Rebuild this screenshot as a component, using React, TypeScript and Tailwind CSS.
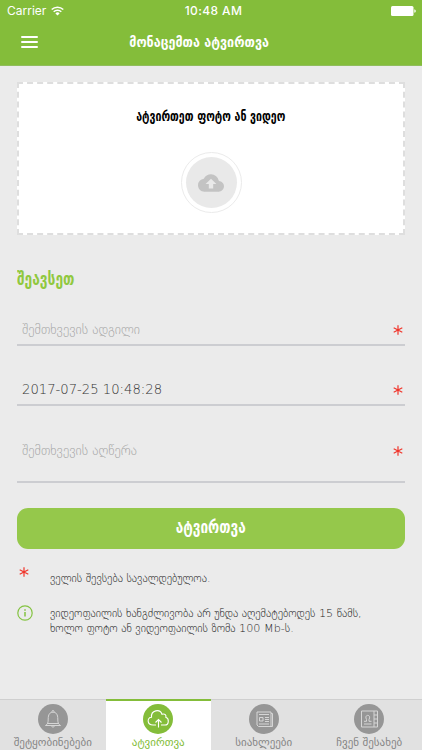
import type { ReactNode } from "react";

interface FieldProps {
  text: string;
  filled?: boolean;
  className: string;
}

interface TabProps {
  label: string;
  active?: boolean;
  children: ReactNode;
}

const CONDENSED = "font-['DejaVu_Sans_Condensed','DejaVu_Sans',sans-serif] font-bold whitespace-nowrap";

function Asterisk({ className = "" }: { className?: string }) {
  return (
    <svg viewBox="0 0 10 10" className={`w-[10px] h-[10px] shrink-0 ${className}`} stroke="#f0352b" strokeWidth="1.2">
      <path d="M5 .3v9.4M.7 2.7l8.6 4.6M9.3 2.7L.7 7.3" />
    </svg>
  );
}

function Field({ text, filled, className }: FieldProps) {
  return (
    <div className={`flex justify-between border-b-2 border-[#cccdd1] pl-[5px] pr-[2px] ${className}`}>
      <span className={`text-[13.2px] leading-[22px] font-extralight whitespace-nowrap ${filled ? "text-[#333]" : "text-[#a5a5a5]"}`}>
        {text}
      </span>
      <Asterisk className="mt-[6px]" />
    </div>
  );
}

function Tab({ label, active, children }: TabProps) {
  return (
    <div
      className={`flex-1 flex flex-col items-center ${
        active ? "bg-white border-t-2 border-[#84bd3a] pt-[3px]" : "bg-[#e1e1e1] border-t border-[#cfcfcf] pt-1"
      }`}
    >
      <svg viewBox="0 0 30 30" className="w-[30px] h-[30px] shrink-0" fill="none" stroke={active ? "#fff" : "#d6d6d6"} strokeWidth="1">
        <circle cx="15" cy="15" r="15" fill={active ? "#84bd3a" : "#969696"} stroke="none" />
        {children}
      </svg>
      <span className={`mt-0.5 text-[11px] leading-[14px] whitespace-nowrap ${active ? "text-[#84bd3a]" : "text-[#858585]"}`}>
        {label}
      </span>
    </div>
  );
}

export default function App() {
  return (
    <div className="w-[422px] h-[750px] flex flex-col overflow-hidden bg-[#ebebeb] font-['DejaVu_Sans',sans-serif]">
      <header className="h-[66px] shrink-0 bg-[#84bd3a] text-white border-b border-[#90bd5c]">
        {/* Status bar */}
        <div className="h-[22px] grid grid-cols-3 items-center pl-[7px] pr-[6px] font-[Inter,sans-serif]">
          <div className="flex items-center gap-[5px] text-[12px]">
            Carrier
            <svg viewBox="0 0 13 10" className="w-[13px] h-[10px]" fill="none" stroke="#fff" strokeWidth="1.5">
              <path d="M.7 3.5a8.3 8.3 0 0 1 11.6 0M2.7 5.7a5.4 5.4 0 0 1 7.6 0" />
              <path d="M6.5 9.5L4.4 7.4a3 3 0 0 1 4.2 0z" fill="#fff" stroke="none" />
            </svg>
          </div>
          <span className="pl-1 text-center text-[12px] font-medium tracking-[0.4px]">10:48 AM</span>
          <svg viewBox="0 0 25 10" className="w-[25px] h-[10px] justify-self-end" fill="#fff">
            <rect width="22.5" height="10" rx="1.5" />
            <path d="M23.3 3.2q1.5.4 1.5 1.8t-1.5 1.8z" />
          </svg>
        </div>
        {/* Title bar */}
        <div className="h-10 grid grid-cols-[1fr_auto_1fr] items-center pl-[21px] pr-[42px]">
          <div className="w-[17px] flex flex-col gap-[3px]">
            <i className="h-0.5 bg-white rounded-full" />
            <i className="h-0.5 bg-white rounded-full" />
            <i className="h-0.5 bg-white rounded-full" />
          </div>
          <h1 className={`text-[15px] scale-x-[0.93] ml-[-2px] ${CONDENSED}`}>მონაცემთა ატვირთვა</h1>
        </div>
      </header>

      <main className="flex-1 px-[17px] pt-4">
        <section className="h-[153px] bg-white border-2 border-dashed border-[#dedede] flex flex-col items-center">
          <h2 className={`mt-[22px] leading-5 text-[14px] scale-x-[0.84] text-black ${CONDENSED}`}>ატვირთეთ ფოტო ან ვიდეო</h2>
          <div className="mt-[26px] w-[61px] h-[61px] shrink-0 rounded-full border border-[#ebebeb] flex items-center justify-center">
            <div className="w-[51px] h-[51px] rounded-full bg-[#e9e9e9] flex items-center justify-center">
              <svg viewBox="0 0 24 24" className="w-[26px] h-[26px]" fill="#c3c3c3">
                <path d="M19.35 10.04A7.49 7.49 0 0 0 12 4C9.11 4 6.6 5.64 5.35 8.04A5.994 5.994 0 0 0 0 14c0 3.31 2.69 6 6 6h13c2.76 0 5-2.24 5-5 0-2.64-2.05-4.78-4.65-4.96zM14 13v4h-4v-4H7l5-5 5 5h-3z" />
              </svg>
            </div>
          </div>
        </section>

        <h2 className={`mt-8 h-6 leading-6 text-[17px] origin-left scale-x-[0.9] text-[#90c83f] ${CONDENSED}`}>შეავსეთ</h2>
        <Field text="შემთხვევის ადგილი" className="mt-[28px] h-[27px]" />
        <Field text="2017-07-25 10:48:28" filled className="mt-[33px] h-[27px]" />
        <Field text="შემთხვევის აღწერა" className="mt-[34px] h-[43px]" />

        <button className="mt-[25px] w-full h-[41px] rounded-[11px] bg-[#95c84b] text-white flex items-center justify-center">
          <span className={`-mt-1 text-[18px] scale-x-[0.84] ${CONDENSED}`}>ატვირთვა</span>
        </button>

        <div className="mt-[18px] flex text-[11.2px] leading-[15px] text-[#222] font-extralight">
          <Asterisk className="ml-0.5 mr-[21px]" />
          <p className="mt-[4px] whitespace-nowrap">ველის შევსება სავალდებულოა.</p>
        </div>
        <div className="mt-[20px] flex text-[11.2px] leading-[15px] text-[#222] font-extralight">
          <svg viewBox="0 0 16 16" className="w-4 h-4 mr-[17px] -mt-px shrink-0" fill="none" stroke="#84c341" strokeWidth="1.2">
            <circle cx="8" cy="8" r="7.2" />
            <path d="M8 7v4.4M8 4.3v1.5" strokeWidth="1.5" />
          </svg>
          <p className="whitespace-nowrap">
            ვიდეოფაილის ხანგძლივობა არ უნდა აღემატებოდეს 15 წამს,
            <br />
            ხოლო ფოტო ან ვიდეოფაილის ზომა 100 Mb-ს.
          </p>
        </div>
      </main>

      <nav className="h-[51px] shrink-0 flex">
        <Tab label="შეტყობინებები">
          <path d="M7.5 21.5c2.3-1.2 2.7-3 2.700-6.500 0-4.500 1.500-6.800 4.800-6.800s4.800 2.300 4.800 6.800c0 3.500.4 5.300 2.700 6.500zM14 8c-.6-2 2.600-2 2 0M13.300 22q1.700 2.600 3.400 0M9.500 19.500h11" />
        </Tab>
        <Tab label="ატვირთვა" active>
          <path d="M13 21H10C3.800 21 3.800 13.300 8.500 13.300 7.800 6 17 4.500 19 10.300 22 9.200 23.500 11.500 22.800 13.200 26.500 14.500 26 21 22 21H18M15.500 23.500V15.500M12.500 18.500l3-3 3 3" strokeWidth="1.100" />
        </Tab>
        <Tab label="სიახლეები">
          <path d="M8 8h14v14.500H9.500L8 21zM22 9.500h1.500v13H22M10 10.500h10M10.500 13.500h3.500v3.500h-3.500zM16 13.500h4M16 15.500h4M16 17.500h4M10 20h10" />
        </Tab>
        <Tab label="ჩვენ შესახებ">
          <path d="M7.500 7h12.500v16H7.500zM20 7h3.500v16H20M20 11H23.500M20 15H23.500M20 19H23.500M10 17.300h2.500v-1.800c-3-5.500 5.500-5.500 2.500 0v1.800h2.500M10 20h7.500" />
        </Tab>
      </nav>
    </div>
  );
}
